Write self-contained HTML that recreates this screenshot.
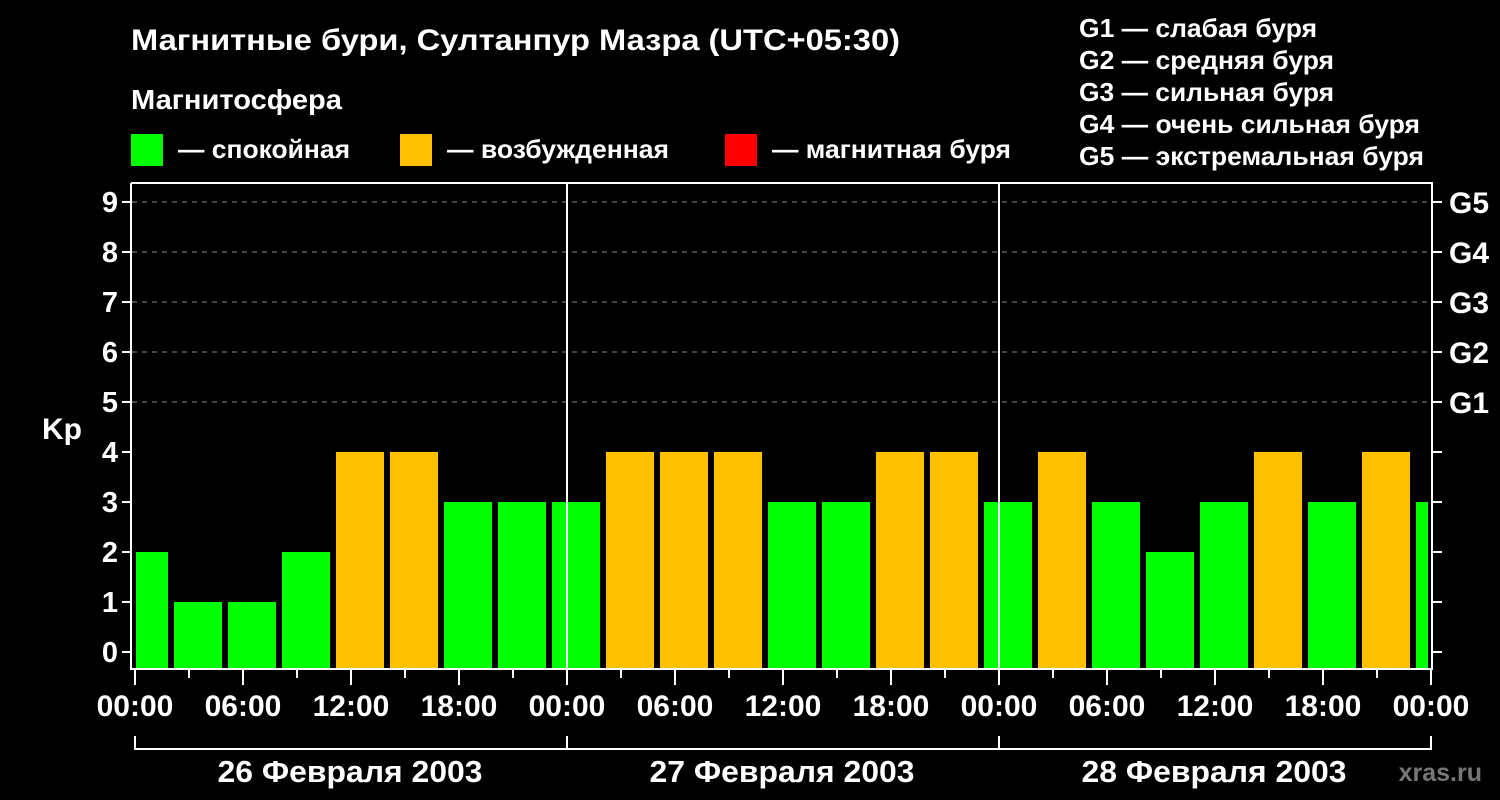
<!DOCTYPE html>
<html><head><meta charset="utf-8"><style>
html,body{margin:0;padding:0;background:#000;}
svg{display:block;font-family:"Liberation Sans",sans-serif;font-weight:bold;}
</style></head><body>
<svg width="1500" height="800" viewBox="0 0 1500 800" xmlns="http://www.w3.org/2000/svg">
<rect width="1500" height="800" fill="#000"/>
<g fill="#fff" font-size="26">
<text x="131" y="50" font-size="30" textLength="769" lengthAdjust="spacingAndGlyphs">Магнитные бури, Султанпур Мазра (UTC+05:30)</text>
<text x="131" y="109" font-size="28" textLength="211" lengthAdjust="spacingAndGlyphs">Магнитосфера</text>
<text x="178" y="158" textLength="172" lengthAdjust="spacingAndGlyphs">— спокойная</text>
<text x="447" y="158" textLength="222" lengthAdjust="spacingAndGlyphs">— возбужденная</text>
<text x="772" y="158" textLength="239" lengthAdjust="spacingAndGlyphs">— магнитная буря</text>
<text x="1079" y="37" textLength="238" lengthAdjust="spacingAndGlyphs">G1 — слабая буря</text>
<text x="1079" y="69" textLength="255" lengthAdjust="spacingAndGlyphs">G2 — средняя буря</text>
<text x="1079" y="101" textLength="255" lengthAdjust="spacingAndGlyphs">G3 — сильная буря</text>
<text x="1079" y="133" textLength="341" lengthAdjust="spacingAndGlyphs">G4 — очень сильная буря</text>
<text x="1079" y="165" textLength="345" lengthAdjust="spacingAndGlyphs">G5 — экстремальная буря</text>
</g>
<rect x="131" y="134" width="32" height="32" fill="#00ff00"/>
<rect x="400" y="134" width="32" height="32" fill="#ffc000"/>
<rect x="725" y="134" width="32" height="32" fill="#ff0000"/>
<g stroke="#888" stroke-width="1" stroke-dasharray="5,5">
<line x1="132" y1="202" x2="1432" y2="202"/><line x1="132" y1="252" x2="1432" y2="252"/>
<line x1="132" y1="302" x2="1432" y2="302"/><line x1="132" y1="352" x2="1432" y2="352"/>
<line x1="132" y1="402" x2="1432" y2="402"/>
</g>
<g id="bars"></g>
<g stroke="#fff" stroke-width="2" fill="none">
<polyline points="131,183 1432,183 1432,669 131,669 131,183"/>
<line x1="567" y1="183" x2="567" y2="669"/><line x1="999" y1="183" x2="999" y2="669"/>
<path d="M122 202h9M122 252h9M122 302h9M122 352h9M122 402h9M122 452h9M122 502h9M122 552h9M122 602h9M122 652h9"/>
<path d="M1432 202h10M1432 252h10M1432 302h10M1432 352h10M1432 402h10M1432 452h10M1432 502h10M1432 552h10M1432 602h10M1432 652h10"/>
<path d="M135 736v13h1296v-13M567 736v13M999 736v13"/>
</g>
<g id="ticks" stroke="#fff" stroke-width="2"></g>
<g fill="#fff" font-size="29" text-anchor="end">
<text x="118" y="212">9</text><text x="118" y="262">8</text><text x="118" y="312">7</text><text x="118" y="362">6</text><text x="118" y="412">5</text><text x="118" y="462">4</text><text x="118" y="512">3</text><text x="118" y="562">2</text><text x="118" y="612">1</text><text x="118" y="662">0</text>
</g>
<text x="42" y="439" fill="#fff" font-size="30">Kp</text>
<g fill="#fff" font-size="30">
<text x="1449" y="213">G5</text><text x="1449" y="263">G4</text><text x="1449" y="313">G3</text><text x="1449" y="363">G2</text><text x="1449" y="413">G1</text>
</g>
<g fill="#fff" font-size="30" text-anchor="middle" id="xl"></g>
<g fill="#fff" font-size="31" text-anchor="middle">
<text x="350" y="782" textLength="265" lengthAdjust="spacingAndGlyphs">26 Февраля 2003</text>
<text x="782" y="782" textLength="265" lengthAdjust="spacingAndGlyphs">27 Февраля 2003</text>
<text x="1214" y="782" textLength="265" lengthAdjust="spacingAndGlyphs">28 Февраля 2003</text>
</g>
<text x="1482" y="781" fill="#777" font-size="25" text-anchor="end">xras.ru</text>
<script>
var v=[2,1,1,2,4,4,3,3,3,4,4,4,3,3,4,4,3,4,3,2,3,4,3,4,3],ns="http://www.w3.org/2000/svg",b=document.getElementById("bars");
v.forEach(function(k,i){var x0=Math.max(136,120+54*i),x1=Math.min(1428,168+54*i);var r=document.createElementNS(ns,"rect");r.setAttribute("x",x0);r.setAttribute("width",x1-x0);r.setAttribute("y",652-50*k);r.setAttribute("height",16+50*k);r.setAttribute("fill",k>=5?"#ff0000":k>=4?"#ffc000":"#00ff00");b.appendChild(r);});
var t=document.getElementById("ticks"),xl=document.getElementById("xl"),lab=["00:00","06:00","12:00","18:00"];
for(var j=0;j<=24;j++){var x=135+54*j;var l=document.createElementNS(ns,"line");l.setAttribute("x1",x);l.setAttribute("x2",x);l.setAttribute("y1",669);l.setAttribute("y2",j%2?678:685);t.appendChild(l);
if(j%2==0){var tx=document.createElementNS(ns,"text");tx.setAttribute("x",x);tx.setAttribute("y",716);tx.textContent=lab[(j/2)%4];xl.appendChild(tx);}}
</script>
</svg>
</body></html>
